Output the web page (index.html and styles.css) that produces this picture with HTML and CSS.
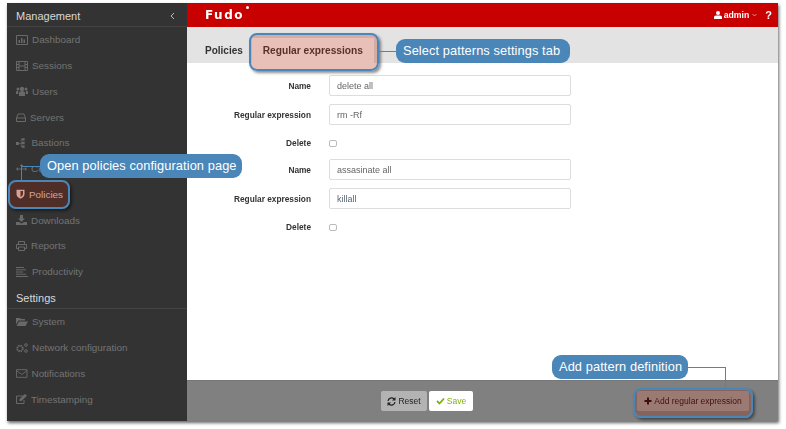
FILE: index.html
```html
<!DOCTYPE html>
<html lang="en">
<head>
<meta charset="utf-8">
<title>Fudo policies</title>
<link rel="stylesheet" href="styles.css">
</head>
<body>
<div class="page">
  <div class="window">
    <aside class="sidebar">
      <div class="side-head"><span>Management</span>
        <svg width="5" height="8" viewBox="0 0 5 8"><path d="M4 1 1 4l3 3" fill="none" stroke="#bbb" stroke-width="1"/></svg>
      </div>
      <a class="nav-item"><svg class="nav-icon" width="12" height="10" viewBox="0 0 12 10"><path d="M.5.500h11v9H.5z" fill="none" stroke="currentColor"/><path d="M2.500 5H4v3H2.500zM5 3h1.500v5H5zM7.500 4.500H9V8H7.500z" fill="currentColor"/></svg>Dashboard</a>
      <a class="nav-item"><svg class="nav-icon" width="12" height="10" viewBox="0 0 12 10"><path d="M.5.500h11v9H.5zM3 .5v9M9 .5v9M3 5h6M.5 3.500H3M.5 6.500H3M9 3.500h2.500M9 6.500h2.500" fill="none" stroke="currentColor"/></svg>Sessions</a>
      <a class="nav-item"><svg class="nav-icon" width="12" height="10" viewBox="0 0 12 10"><circle cx="6" cy="3" r="2.200" fill="currentColor"/><circle cx="2" cy="3" r="1.500" fill="currentColor"/><circle cx="10" cy="3" r="1.500" fill="currentColor"/><path d="M3 10V7q0-2 3-2t3 2v3zM0 8V6q0-1.500 2-1.500L2.300 8zM12 8V6q0-1.500-2-1.500L9.700 8z" fill="currentColor"/></svg>Users</a>
      <a class="nav-item"><svg class="nav-icon" width="10" height="9" viewBox="0 0 10 9"><path d="M2 1h6l1.500 4v3.500H.5V5zM.5 5h9" fill="none" stroke="currentColor"/></svg>Servers</a>
      <a class="nav-item"><svg class="nav-icon" width="11.500" height="10" viewBox="0 0 12 10"><path d="M0 4h3v3H0zM6 0h3v2.500H6zM6 3.800h3v2.500H6zM6 7.500h3V10H6z" fill="currentColor"/><path d="M3 5.500h2.500M5.500 1.200v7.500M5.500 1.200H7M5.500 8.700H7" fill="none" stroke="currentColor" stroke-width=".7"/></svg>Bastions</a>
      <a class="nav-item"><svg class="nav-icon" width="11" height="10" viewBox="0 0 11 10"><path d="M1 5h9M5.500 1v8" stroke="currentColor" fill="none"/><path d="M0 5l2-2v4zM11 5 9 3v4zM5.500 0l2 2h-4z" fill="currentColor"/></svg>Connections</a>
      <a class="nav-item is-active"><svg class="nav-icon" width="9" height="10" viewBox="0 0 9 10"><path d="M.5.800h8V5q0 3-4 4.800Q.5 8 .5 5z" fill="#ecd9d4"/><path d="M4.500 2H7v3q0 1.800-2.500 3z" fill="#5a2d25"/></svg>Policies</a>
      <a class="nav-item"><svg class="nav-icon" width="11" height="10" viewBox="0 0 11 10"><path d="M4 0h3v3.500h2L5.500 7 2 3.500h2zM0 7h3l2.500 1.500L8 7h3v3H0z" fill="currentColor"/></svg>Downloads</a>
      <a class="nav-item"><svg class="nav-icon" width="11" height="10" viewBox="0 0 11 10"><path d="M2.500 3.500V.5h6v3M2.500 7.500H.5v-4h10v4h-2M2.500 6h6v3.500h-6z" fill="none" stroke="currentColor"/></svg>Reports</a>
      <a class="nav-item"><svg class="nav-icon" width="12" height="10" viewBox="0 0 12 10"><path d="M0 .5h8M0 2.800h10M0 5h7M0 7.200h10M0 9.500h12" stroke="currentColor" fill="none"/></svg>Productivity</a>
      <div class="side-head settings"><span>Settings</span></div>
      <a class="nav-item"><svg class="nav-icon" width="12" height="9" viewBox="0 0 12 9"><path d="M0 1h4l1 1h4v1.500H2.500L0 7.500zM3 4.500h9L9.500 9H.5z" fill="currentColor"/></svg>System</a>
      <a class="nav-item"><svg class="nav-icon" width="12" height="10" viewBox="0 0 12 10"><circle cx="4" cy="5.500" r="2.800" fill="none" stroke="currentColor" stroke-width="1.800" stroke-dasharray="1.500 .7"/><circle cx="10" cy="2" r="1.300" fill="none" stroke="currentColor"/><circle cx="10" cy="8" r="1.300" fill="none" stroke="currentColor"/></svg>Network configuration</a>
      <a class="nav-item"><svg class="nav-icon" width="11.500" height="9" viewBox="0 0 12 9"><path d="M.5.500h11v8H.5zM.5 1.500 6 5.500l5.500-4" fill="none" stroke="currentColor"/></svg>Notifications</a>
      <a class="nav-item"><svg class="nav-icon" width="11" height="10" viewBox="0 0 11 10"><path d="M8 2H.5v7.500H8V6" fill="none" stroke="currentColor"/><path d="M3.500 5 9 0l2 1.800L5.500 7H3.500z" fill="currentColor"/></svg>Timestamping</a>
    </aside>
    <main class="main">
      <header class="topbar">
        <div class="logo">Fudo<i class="logo-dot"></i></div>
        <div class="account">
          <svg width="8" height="8" viewBox="0 0 8 8"><circle cx="4" cy="2" r="2" fill="#fff"/><path d="M0 8V6q0-1.500 2-1.500h4Q8 4.500 8 6v2z" fill="#fff"/></svg>
          <span class="account-name">admin</span>
          <svg width="5" height="4" viewBox="0 0 5 4"><path d="M.5 1 2.500 3l2-2" fill="none" stroke="#f0b0b0" stroke-width=".8"/></svg>
          <span class="help">?</span>
        </div>
      </header>
      <nav class="tabs">
        <span class="tab-title">Policies</span>
        <span class="tab">Regular expressions</span>
      </nav>
      <section class="content">
        <div class="form-row"><label class="form-label">Name</label><input class="field" value="delete all"></div>
        <div class="form-row"><label class="form-label">Regular expression</label><input class="field" value="rm -Rf"></div>
        <div class="form-row check-row"><label class="form-label">Delete</label><input class="check" type="checkbox"></div>
        <div class="form-row"><label class="form-label">Name</label><input class="field" value="assasinate all"></div>
        <div class="form-row"><label class="form-label">Regular expression</label><input class="field field-blue" value="killall"></div>
        <div class="form-row check-row"><label class="form-label">Delete</label><input class="check" type="checkbox"></div>
      </section>
      <footer class="footer">
        <div class="actions">
          <button class="btn btn-reset"><svg width="9" height="9" viewBox="0 0 9 9"><path d="M1 4a3.500 3.500 0 0 1 6-2M8 5a3.500 3.500 0 0 1-6 2" fill="none" stroke="#222" stroke-width="1.200"/><path d="M8.500 0v3.500H5zM.5 9V5.500H4z" fill="#222"/></svg>Reset</button>
          <button class="btn btn-save"><svg width="9" height="8" viewBox="0 0 9 8"><path d="M1 4l2.500 2.500L8 1.500" fill="none" stroke="#7fb20e" stroke-width="1.800"/></svg>Save</button>
        </div>
        <button class="btn btn-add"><svg width="8" height="8" viewBox="0 0 8 8"><path d="M4 .5v7M.5 4h7" stroke="#1a0805" stroke-width="2" fill="none"/></svg>Add regular expression</button>
      </footer>
    </main>
  </div>

  <div class="spot spot-policies"></div>
  <div class="spot spot-tab"></div>
  <div class="spot spot-add"></div>

  <div class="wire wire-policies"></div>
  <div class="wire wire-tab"></div>
  <div class="wire wire-add"></div>

  <div class="callout callout-policies">Open policies configuration page</div>
  <div class="callout callout-tab">Select patterns settings tab</div>
  <div class="callout callout-add">Add pattern definition</div>
</div>
</body>
</html>
```
FILE: styles.css
```css
* { box-sizing: border-box; }
html, body { margin: 0; height: 100%; background: #fff; overflow: hidden; }
body { font-family: "Liberation Sans", Arial, sans-serif; }

.page { position: relative; width: 786px; height: 429px; padding: 3px 8px 8px 7px; filter: blur(.3px); }
.window { display: flex; width: 771px; height: 418px; box-shadow: 1px 2px 3px rgba(0,0,0,.6); }

.sidebar { width: 180px; flex: none; background: #333; overflow: hidden; }
.side-head { display: flex; align-items: center; justify-content: space-between; height: 24px; padding: 3px 12px 0 9px; border-bottom: 1px solid #444; color: #d8d8d8; font-size: 11px; }
.side-head.settings { height: 24.500px; padding-top: 3px; }
.nav-item { display: flex; align-items: center; gap: 4px; height: 25.750px; padding-left: 9px; color: #737373; font-size: 9.900px; }
.nav-icon { flex: none; opacity: .85; }
.nav-item.is-active { color: #ecd9d4; }
.nav-item.is-active .nav-icon { opacity: 1; }

.main { flex: 1; display: flex; flex-direction: column; min-width: 0; }
.topbar { display: flex; align-items: center; justify-content: space-between; height: 24px; flex: none; padding: 0 6px 0 18px; background: #c80000; color: #fff; }
.logo { position: relative; font-family: "DejaVu Sans", sans-serif; font-size: 12px; font-weight: 700; letter-spacing: 1.500px; line-height: 1; }
.logo-dot { position: absolute; left: 41px; top: -3px; width: 3px; height: 3px; border-radius: 50%; background: #fff; }
.account { display: flex; align-items: center; gap: 2px; font-size: 9px; font-weight: 700; }
.account-name { margin-right: 1px; font-size: 8.700px; }
.help { margin-left: 6px; font-size: 11px; }

.tabs { display: flex; align-items: flex-end; height: 36px; flex: none; padding-left: 18px; background: #e3e3e3; font-size: 10px; font-weight: 700; color: #333; }
.tab-title { height: 25px; line-height: 25px; margin-right: 9px; }
.tab { height: 25px; width: 122px; line-height: 25px; text-align: center; background: #fff; font-size: 10.200px; }

.content { flex: 1; display: flex; flex-direction: column; gap: 8px; padding-top: 12px; background: #fff; }
.form-row { display: grid; grid-template-columns: 124px 242px; column-gap: 18px; align-items: center; }
.form-label { text-align: right; font-size: 8.300px; font-weight: 700; color: #333; }
.field { width: 242px; height: 21px; padding: 0 7px; border: 1px solid #ddd; border-radius: 2px; outline: 0; background: #fff; font: 9px "Liberation Sans", Arial, sans-serif; color: #666; }
.field-blue { color: #567; }
.check-row { height: 16px; margin-top: 2px; }
.check { appearance: none; width: 8px; height: 7px; margin: 0; border: 1px solid #bbb; border-radius: 2px; background: #fff; }

.footer { display: flex; align-items: center; height: 41px; flex: none; padding: 0 29px 0 194px; border-top: 1px solid #777; background: #808080; }
.actions { display: flex; gap: 2px; }
.btn { display: flex; align-items: center; justify-content: center; gap: 2px; height: 20px; padding: 0; border: 0; border-radius: 2px; font: 8.500px "Liberation Sans", Arial, sans-serif; }
.btn-reset { width: 46px; background: #b3b3b3; color: #222; }
.btn-save { width: 44px; background: #fff; color: #7fb20e; }
.btn-add { width: 112px; margin-left: auto; background: #a0a0a0; color: #1a0805; }

.spot { position: absolute; border: 2px solid #4a86b8; border-radius: 8px; background: rgba(150,35,15,.3); box-shadow: 2px 2px 3px rgba(0,0,0,.45); }
.spot-policies { left: 8px; top: 180px; width: 62px; height: 29px; }
.spot-tab { left: 249px; top: 33px; width: 130px; height: 38px; background: rgba(180,45,20,.3); }
.spot-add { left: 633px; top: 388px; width: 120px; height: 30px; }

.wire { position: absolute; border: solid #4a86b8; border-width: 0; }
.wire-policies { left: 21px; top: 166px; width: 20px; height: 14px; border-top-width: 1px; border-left-width: 1px; }
.wire-tab { left: 379px; top: 51px; width: 18px; height: 1px; border-top-width: 1px; }
.wire-add { left: 687px; top: 367px; width: 39px; height: 21px; border-top-width: 1px; border-right-width: 1px; }

.callout { position: absolute; height: 24px; padding: 0 7px; border-radius: 9px; background: #4a86b8; color: #fff; font-size: 12.800px; line-height: 24px; letter-spacing: .1px; white-space: nowrap; }
.callout-policies { left: 40px; top: 154px; width: 202px; }
.callout-tab { left: 396px; top: 39px; width: 174px; }
.callout-add { left: 552px; top: 355px; width: 136px; }
```
